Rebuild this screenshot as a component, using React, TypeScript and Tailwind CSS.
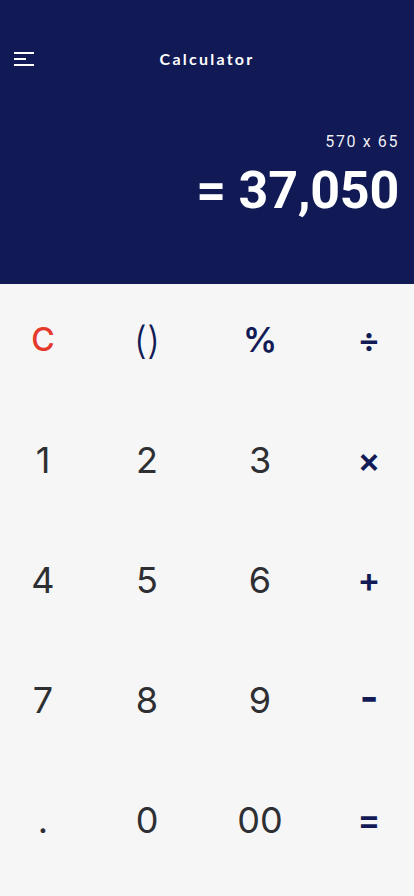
import React from 'react';

type Key = { label: string; tone: 'clear' | 'op' | 'num' };

const keys: Key[] = [
  { label: 'C', tone: 'clear' },
  { label: '()', tone: 'op' },
  { label: '%', tone: 'op' },
  { label: '÷', tone: 'op' },
  { label: '1', tone: 'num' },
  { label: '2', tone: 'num' },
  { label: '3', tone: 'num' },
  { label: '×', tone: 'op' },
  { label: '4', tone: 'num' },
  { label: '5', tone: 'num' },
  { label: '6', tone: 'num' },
  { label: '+', tone: 'op' },
  { label: '7', tone: 'num' },
  { label: '8', tone: 'num' },
  { label: '9', tone: 'num' },
  { label: '-', tone: 'op' },
  { label: '.', tone: 'num' },
  { label: '0', tone: 'num' },
  { label: '00', tone: 'num' },
  { label: '=', tone: 'op' },
];

function KeyButton({ k, last }: { k: Key; last: boolean }) {
  const color =
    k.tone === 'clear'
      ? 'text-[#e5392b]'
      : k.tone === 'op'
      ? 'text-[#121b55]'
      : 'text-[#2e2f33]';
  let size = 'text-[36px] font-normal';
  if (k.label === 'C') size = 'text-[32px] font-medium';
  else if (k.label === '()') size = 'text-[38px] font-light';
  else if (k.label === '-') size = 'text-[40px] font-bold pb-[14px]';
  else if (k.tone === 'op') size = 'text-[34px] font-semibold';
  return (
    <button
      className={`flex h-[120px] items-center justify-center pb-2 leading-none ${color} ${size} ${
        last ? 'pl-3' : ''
      }`}
    >
      {k.label}
    </button>
  );
}

export default function App() {
  return (
    <div className="flex min-h-[896px] w-[414px] flex-col bg-[#f6f6f6] font-['Inter',sans-serif]">
      <header className="flex h-[284px] flex-col bg-[#111a55] px-[14px] text-white">
        <div className="mt-[44px] grid h-[30px] grid-cols-[1fr_auto_1fr] items-center">
          <button className="flex w-5 flex-col gap-[4px]" aria-label="Menu">
            <span className="h-[2px] w-5 bg-white" />
            <span className="h-[2px] w-3 bg-white" />
            <span className="h-[2px] w-5 bg-white" />
          </button>
          <h1 className="font-['Lato',sans-serif] text-[16px] font-bold tracking-[0.14em]">Calculator</h1>
          <span />
        </div>
        <p className="mt-[58px] pr-[1px] text-right font-['Roboto',sans-serif] text-[16px] leading-[20px] tracking-[0.1em] text-white/95">
          570 x 65
        </p>
        <p className="mt-[13px] pr-[1px] text-right font-['Roboto',sans-serif] text-[52px] font-bold leading-none tracking-[-0.005em]">
          = 37,050
        </p>
      </header>
      <main className="grid grid-cols-[86px_122px_104px_1fr]">
        {keys.map((k, i) => (
          <KeyButton key={k.label} k={k} last={i % 4 === 3} />
        ))}
      </main>
    </div>
  );
}
